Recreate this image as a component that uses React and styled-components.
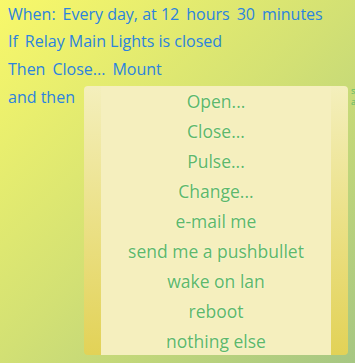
import React from "react";
import styled, { createGlobalStyle } from "styled-components";

const Global = createGlobalStyle`
  html, body { margin: 0; padding: 0; }
  body {
    width: 355px;
    height: 363px;
    overflow: hidden;
    font-family: "Open Sans", "Noto Sans", sans-serif;
    background: linear-gradient(135deg, #f8f86a 0%, #d2e074 50%, #a6c783 100%);
  }
`;

const Page = styled.div`
  position: relative;
  height: 363px;
  padding: 0 0 0 8px;
  box-sizing: border-box;
`;

const Line = styled.div`
  display: flex;
  gap: 7px;
  height: 27.6px;
  align-items: center;
  color: #2b83df;
  font-size: 16px;
  white-space: nowrap;
`;

const Menu = styled.ul`
  position: absolute;
  left: 84px;
  top: 86px;
  width: 264px;
  height: 269px;
  margin: 0;
  padding: 0 17px;
  box-sizing: border-box;
  list-style: none;
  border-radius: 4px;
  background: linear-gradient(180deg, #f4efbc 0%, #ece28c 45%, #e2d257 100%);
`;

const Items = styled.div`
  background: #f5efbe;
  height: 100%;
`;

const Item = styled.li`
  height: 30px;
  line-height: 30px;
  text-align: center;
  color: #5db86a;
  font-size: 17.5px;
  text-shadow: 0 0 2px #fffbe0;
`;

const Peek = styled.div`
  position: absolute;
  left: 351px;
  top: 86px;
  display: flex;
  flex-direction: column;
  gap: 2px;
  color: #5db86a;
  font-size: 9px;
  line-height: 9px;
`;

const items = [
  "Open...",
  "Close...",
  "Pulse...",
  "Change...",
  "e-mail me",
  "send me a pushbullet",
  "wake on lan",
  "reboot",
  "nothing else",
];

export default function App() {
  return (
    <Page>
      <Global />
      <Line>
        <span>When:</span>
        <span>Every day, at 12</span>
        <span>hours</span>
        <span>30</span>
        <span>minutes</span>
      </Line>
      <Line>
        <span>If</span>
        <span>Relay Main Lights is closed</span>
      </Line>
      <Line>
        <span>Then</span>
        <span>Close...</span>
        <span>Mount</span>
      </Line>
      <Line>
        <span>and then</span>
      </Line>
      <Menu>
        <Items>
          {items.map((t) => (
            <Item key={t}>{t}</Item>
          ))}
        </Items>
      </Menu>
      <Peek>
        <span>s</span>
        <span>a</span>
      </Peek>
    </Page>
  );
}
